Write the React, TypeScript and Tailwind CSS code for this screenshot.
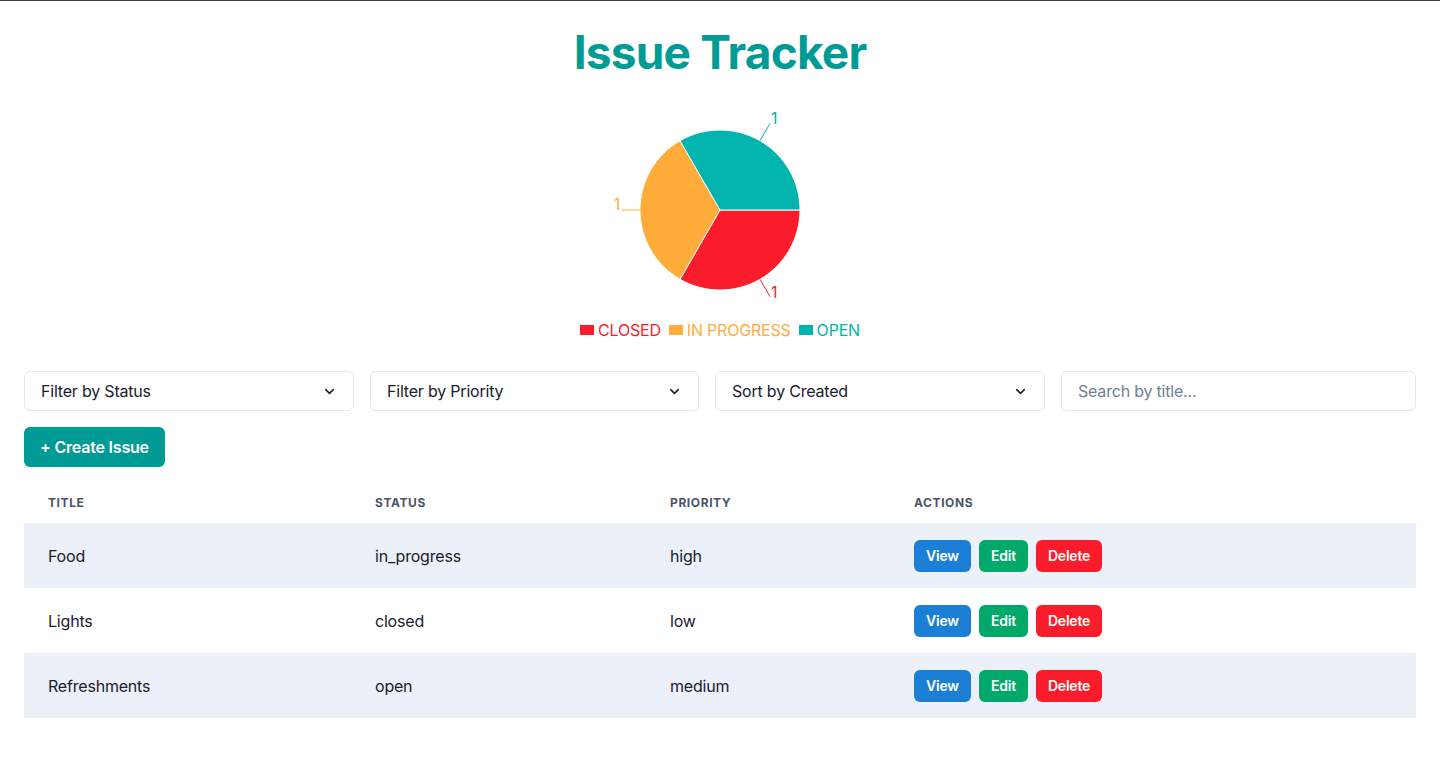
import { ChevronDown } from "lucide-react";

const issues = [
  { title: "Food", status: "in_progress", priority: "high" },
  { title: "Lights", status: "closed", priority: "low" },
  { title: "Refreshments", status: "open", priority: "medium" },
];

const RED = "#fa1c2a";
const ORANGE = "#ffac3a";
const TEAL = "#02b4ae";

function StatusPie() {
  // center 100,100 radius 80 inside a 200x200 box
  const cx = 100;
  const cy = 100;
  const r = 80;
  const pt = (deg: number, rad = r) => {
    const a = (deg * Math.PI) / 180;
    return [cx + rad * Math.cos(a), cy + rad * Math.sin(a)];
  };
  const slice = (a0: number, a1: number) => {
    const [x0, y0] = pt(a0);
    const [x1, y1] = pt(a1);
    return `M${cx},${cy} L${x0},${y0} A${r},${r} 0 0 1 ${x1},${y1} Z`;
  };
  return (
    <svg width="200" height="200" viewBox="0 0 200 200" className="overflow-visible">
      <path d={slice(0, 120)} fill={RED} stroke="#fff" strokeWidth="1" />
      <path d={slice(120, 240)} fill={ORANGE} stroke="#fff" strokeWidth="1" />
      <path d={slice(240, 360)} fill={TEAL} stroke="#fff" strokeWidth="1" />
      <path d="M140,169.3 L150,186.6" stroke={RED} fill="none" />
      <text x="151" y="182" fill={RED} fontSize="16" dominantBaseline="central" fontFamily="Inter, sans-serif">1</text>
      <path d="M20,100 L2,100" stroke={ORANGE} fill="none" />
      <text x="-3" y="94" fill={ORANGE} fontSize="16" textAnchor="middle" dominantBaseline="central" fontFamily="Inter, sans-serif">1</text>
      <path d="M140,30.7 L150,13.4" stroke={TEAL} fill="none" />
      <text x="151" y="8" fill={TEAL} fontSize="16" dominantBaseline="central" fontFamily="Inter, sans-serif">1</text>
    </svg>
  );
}

function Select({ label }: { label: string }) {
  return (
    <div className="flex h-10 items-center justify-between rounded-md border border-[#e2e8f0] bg-white pl-4 pr-4 text-base text-[#1a202c]">
      <span>{label}</span>
      <ChevronDown size={15} strokeWidth={2.5} className="text-[#1a202c]" />
    </div>
  );
}

export default function App() {
  return (
    <div className="min-h-[779px] border-t border-[#3a3a3a] bg-white px-6 font-['Inter',sans-serif] tracking-[-0.2px] text-[#1a202c]">
      <h1 className="pt-[23px] text-center text-[46px] font-bold leading-[56px] tracking-[-0.8px] text-[#009b94]">
        Issue Tracker
      </h1>

      <div className="mt-[30px] flex justify-center">
        <StatusPie />
      </div>

      <div className="mt-[10px] flex items-center justify-center gap-[8px] text-base leading-5">
        <span className="flex items-center gap-[4px] text-[#fa1c2a]">
          <span className="h-[10px] w-[14px] bg-[#fa1c2a]" />
          CLOSED
        </span>
        <span className="flex items-center gap-[4px] text-[#ffac3a]">
          <span className="h-[10px] w-[14px] bg-[#ffac3a]" />
          IN PROGRESS
        </span>
        <span className="flex items-center gap-[4px] text-[#02b4ae]">
          <span className="h-[10px] w-[14px] bg-[#02b4ae]" />
          OPEN
        </span>
      </div>

      <div className="mt-[31px] grid grid-cols-[330fr_329fr_330fr_355fr] gap-4">
        <Select label="Filter by Status" />
        <Select label="Filter by Priority" />
        <Select label="Sort by Created" />
        <input
          placeholder="Search by title..."
          className="h-10 rounded-md border border-[#e2e8f0] px-4 text-base outline-none placeholder:text-[#718096]"
        />
      </div>

      <button className="mt-4 h-10 rounded-md bg-[#009b94] px-4 text-base font-semibold text-white">
        + Create Issue
      </button>

      <table className="mt-4 w-full border-collapse text-left">
        <thead>
          <tr className="h-10 text-xs font-bold uppercase tracking-wider text-[#4a5568]">
            <th className="w-[327px] px-6">Title</th>
            <th className="w-[295px] px-6">Status</th>
            <th className="w-[244px] px-6">Priority</th>
            <th className="px-6">Actions</th>
          </tr>
        </thead>
        <tbody>
          {issues.map((issue, i) => (
            <tr key={issue.title} className={`h-[65px] text-base ${i % 2 === 0 ? "bg-[#ebf0f9]" : "bg-white"}`}>
              <td className="px-6">{issue.title}</td>
              <td className="px-6">{issue.status}</td>
              <td className="px-6">{issue.priority}</td>
              <td className="px-6">
                <div className="flex gap-2">
                  <button className="h-8 rounded-md bg-[#1b7fd6] px-3 text-sm font-semibold text-white">View</button>
                  <button className="h-8 rounded-md bg-[#00a86a] px-3 text-sm font-semibold text-white">Edit</button>
                  <button className="h-8 rounded-md bg-[#fa1c2a] px-3 text-sm font-semibold text-white">Delete</button>
                </div>
              </td>
            </tr>
          ))}
        </tbody>
      </table>
    </div>
  );
}
